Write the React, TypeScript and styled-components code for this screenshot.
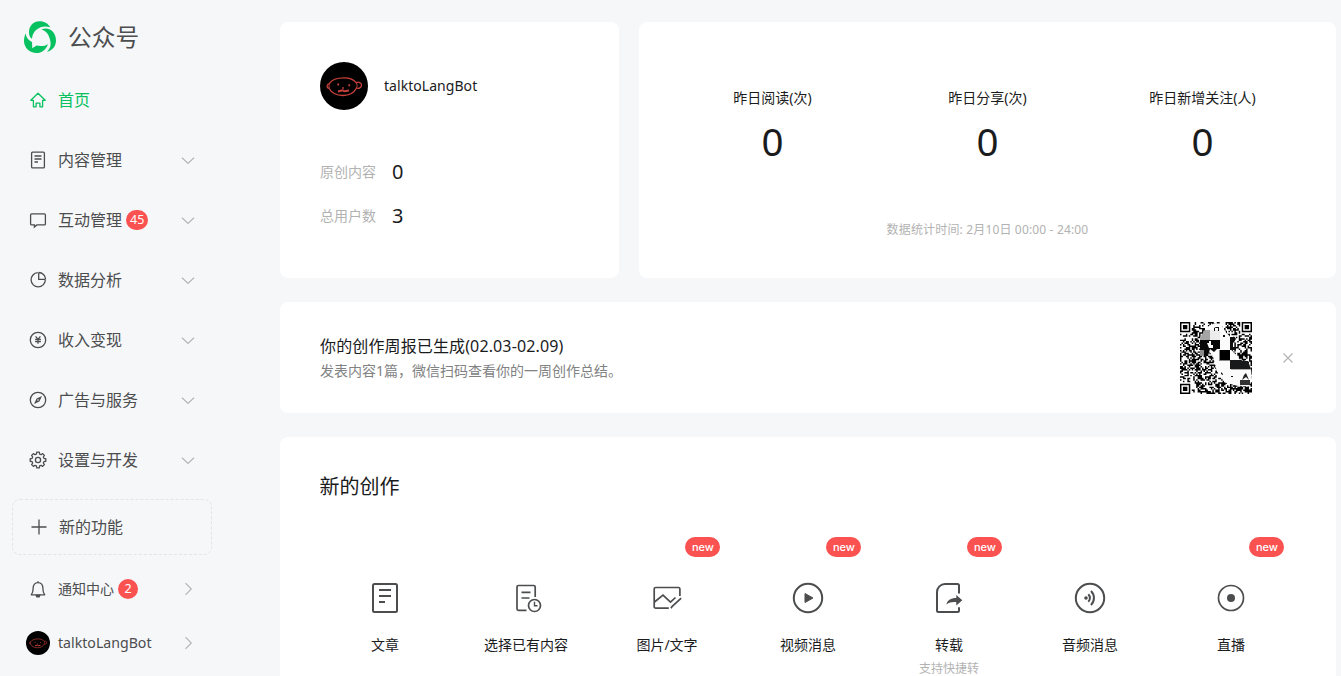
import React from "react";
import styled, { createGlobalStyle } from "styled-components";

const GlobalStyle = createGlobalStyle`
  * { box-sizing: border-box; }
  body {
    margin: 0;
    background: #f6f7f9;
    color: #1a1b1c;
    font-family: "Noto Sans", "Noto Sans CJK SC", sans-serif;
    font-weight: 400;
    overflow: hidden;
  }
  svg { display: block; flex: none; }
`;

const Page = styled.div`
  display: flex;
  width: 1341px;
  height: 676px;
  overflow: hidden;
`;

const Sidebar = styled.aside`
  width: 280px;
  flex: none;
  display: flex;
  flex-direction: column;
  color: #4c4d4f;
`;

const Brand = styled.div`
  height: 70px;
  padding: 4px 0 0 24px;
  display: flex;
  align-items: center;
  gap: 12px;
  font-size: 23.7px;
  line-height: 32px;
`;

const Nav = styled.nav`
  display: flex;
  flex-direction: column;
`;

const NavRow = styled.a<{ $active?: boolean }>`
  height: 60px;
  width: 196px;
  padding-left: 28px;
  display: flex;
  align-items: center;
  font-size: 16px;
  line-height: 24px;
  color: ${(p) => (p.$active ? "#07c160" : "#4c4d4f")};
`;

const NavLabel = styled.span`
  margin-left: 10px;
  white-space: nowrap;
`;

const Count = styled.span`
  margin-left: 4px;
  min-width: 20px;
  height: 20px;
  padding: 0 4px;
  border-radius: 10px;
  background: #fa5151;
  color: #fff;
  font-size: 12.5px;
  line-height: 20px;
  text-align: center;
`;

const Arrow = styled.span`
  margin-left: auto;
  color: #b4b6b8;
`;

const NewFeature = styled.div`
  width: 200px;
  height: 56px;
  margin: 9px 0 0 12px;
  padding-left: 16px;
  border: 1px dashed #e2e4e6;
  border-radius: 8px;
  display: flex;
  align-items: center;
  font-size: 16px;
  line-height: 24px;

  span {
    padding-bottom: 1px;
  }
`;

const FooterRow = styled.div<{ $top: number; $size: number }>`
  height: 40px;
  width: 196px;
  margin-top: ${(p) => p.$top}px;
  padding-left: 26px;
  display: flex;
  align-items: center;
  font-size: ${(p) => p.$size}px;
`;

const FooterIcon = styled.span`
  width: 24px;
  display: flex;
  justify-content: center;
`;

const FooterLabel = styled.span`
  margin-left: 8px;
  padding-bottom: 2px;
  white-space: nowrap;
`;

const Main = styled.main`
  width: 1056px;
  flex: none;
  padding-top: 22px;
  display: flex;
  flex-direction: column;
`;

const TopRow = styled.div`
  display: flex;
  gap: 20px;
`;

const Card = styled.section`
  flex: none;
  background: #fff;
  border-radius: 8px;
`;

const AccountCard = styled(Card)`
  width: 339px;
  height: 256px;
  padding: 40px 40px 0;
`;

const AccountHead = styled.div`
  display: flex;
  align-items: center;
  gap: 16px;
  height: 48px;
  margin-bottom: 40px;
  font-size: 14px;
  letter-spacing: 0.05px;

  span {
    padding-bottom: 2px;
  }
`;

const Figure = styled.div`
  display: flex;
  align-items: center;
  height: 44px;
`;

const FigureLabel = styled.span`
  width: 72px;
  padding-bottom: 2px;
  font-size: 14px;
  color: #b2b2b2;
`;

const FigureValue = styled.span`
  font-size: 20px;
  line-height: 28px;
`;

const StatsCard = styled(Card)`
  flex: 1;
  height: 256px;
  padding: 64px 26px 0;
`;

const StatsRow = styled.div`
  display: grid;
  grid-template-columns: repeat(3, 1fr);
`;

const Stat = styled.div`
  display: flex;
  flex-direction: column;
  align-items: center;
`;

const StatLabel = styled.span`
  font-size: 14px;
  line-height: 24px;
`;

const StatValue = styled.span`
  margin-top: 5px;
  font-size: 38.5px;
  line-height: 52px;
`;

const StatTime = styled.p`
  margin: 53px 0 0;
  text-align: center;
  font-size: 12px;
  letter-spacing: 0.16px;
  line-height: 20px;
  color: #b2b2b2;
`;

const ReportCard = styled(Card)`
  height: 111px;
  margin-top: 24px;
  padding: 0 42px 0 40px;
  display: flex;
  align-items: center;
`;

const ReportText = styled.div`
  flex: 1;
`;

const ReportTitle = styled.h3`
  margin: 0;
  font-size: 16px;
  font-weight: 400;
  letter-spacing: 0.13px;
  line-height: 26px;
`;

const ReportNote = styled.p`
  margin: 0;
  font-size: 14px;
  line-height: 24px;
  color: #818283;
`;

const CloseButton = styled.span`
  margin-left: 30px;
`;

const CreateCard = styled(Card)`
  height: 300px;
  margin-top: 24px;
  padding: 34px 34.5px 0;
`;

const CreateTitle = styled.h2`
  margin: 0 0 0 5px;
  font-size: 20px;
  font-weight: 400;
  line-height: 32px;
`;

const CreateGrid = styled.div`
  margin-top: 75px;
  display: grid;
  grid-template-columns: repeat(7, 1fr);
`;

const CreateItem = styled.div`
  position: relative;
  display: flex;
  flex-direction: column;
  align-items: center;
`;

const CreateLabel = styled.span`
  margin-top: 15px;
  font-size: 14px;
  line-height: 24px;
  white-space: nowrap;
`;

const CreateHint = styled.span`
  margin-top: 1px;
  font-size: 12px;
  line-height: 22px;
  color: #b2b2b2;
`;

const NewBadge = styled.span`
  position: absolute;
  top: -41px;
  left: calc(50% + 18.4px);
  width: 35px;
  height: 20px;
  border-radius: 10px;
  background: #fa5151;
  color: #fff;
  font-family: Inter, sans-serif;
  font-size: 11px;
  font-weight: 500;
  line-height: 20px;
  text-align: center;
`;

const Logo = () => (
  <svg width="32" height="32" viewBox="0 0 32 32" fill="#07c160">
    <path d="M5.200 13.500C3.800 6.500 8.500 .2 15.500 .2c5 0 9 2.600 10.700 6C17.500 3.600 8.600 8.500 8 17.800c-1.500-1-2.500-2.600-2.800-4.300z" />
    <path d="M17.500 8.500C25.500 5.200 32 11.500 32 19.500c0 5.500-3.500 10-9 11.300 3.300-3.300 4.200-6.300 3.300-10.800C25.200 14 22.500 10 17.500 8.500z" />
    <path d="M1.600 12.500C2.100 16.500 4.500 19.500 8 21l.3 6.300L12.500 24.600c4.500 1 8.500.4 11.500-1.400C22 29 17.500 32 12.500 32 5.500 32 0 26.500 0 20c0-2.800.7-5.500 1.600-7.500z" />
  </svg>
);

type LineProps = { size?: number; children: React.ReactNode; width?: number };
const Line = ({ size = 20, width = 1.3, children }: LineProps) => (
  <svg width={size} height={size} viewBox={`0 0 ${size} ${size}`} fill="none" stroke="currentColor" strokeWidth={width}>
    {children}
  </svg>
);

const HomeIcon = () => (
  <Line width={1.3}>
    <path d="M10 3.200l7.200 7.100h-2.600v6.500h-2.700v-3.600H8.100v3.600H5.400v-6.500H2.800z" strokeLinejoin="round" />
  </Line>
);
const DocIcon = () => (
  <Line>
    <rect x="3.600" y="2.100" width="12.800" height="15.800" rx="1" />
    <path d="M6.500 6h7M6.500 9h7M6.500 12h3.500" />
  </Line>
);
const ChatIcon = () => (
  <Line>
    <path d="M3.600 3.900h12.800a1 1 0 0 1 1 1v9a1 1 0 0 1-1 1H8.800L6.400 17v-2.100H3.600a1 1 0 0 1-1-1v-9a1 1 0 0 1 1-1z" />
  </Line>
);
const PieIcon = () => (
  <Line>
    <path d="M9.800 2.700a7.100 7.100 0 1 0 7.500 7.300" />
    <path d="M10.700 2.500V9.300h6.900M10.700 2.500a7 7 0 0 1 6.900 6.800" />
  </Line>
);
const YenIcon = () => (
  <Line>
    <circle cx="10" cy="10" r="7.700" />
    <path d="M7.600 6.300L10 9.300l2.400-3M10 9.300v4.500M7.100 9.300h5.800M7.100 11.500h5.800" />
  </Line>
);
const CompassIcon = () => (
  <Line>
    <circle cx="10" cy="10" r="7.700" />
    <path d="M14 6l-2.600 5.400-2.800-2.800zM6 14l2.600-5.400 2.800 2.800z" fill="currentColor" stroke="none" />
    <circle cx="10" cy="10" r=".8" fill="#f6f7f9" stroke="none" />
  </Line>
);

const gearPath = (() => {
  const points: string[] = [];
  for (let i = 0; i < 8; i++) {
    [[-0.27, 6.1], [-0.16, 7.9], [0.16, 7.9], [0.27, 6.1]].forEach(([offset, radius]) => {
      const angle = (i * Math.PI) / 4 + offset;
      points.push(`${(10 + radius * Math.sin(angle)).toFixed(2)} ${(10 - radius * Math.cos(angle)).toFixed(2)}`);
    });
  }
  return `M${points.join("L")}z`;
})();
const GearIcon = () => (
  <Line>
    <path d={gearPath} strokeLinejoin="round" />
    <circle cx="10" cy="10" r="2.600" />
  </Line>
);
const PlusIcon = () => (
  <Line size={20} width={1.3}>
    <path d="M10 2.500v15M2.500 10h15" />
  </Line>
);
const BellIcon = () => (
  <Line>
    <path d="M3.300 15.800h13.400c-1.500-1.500-1.800-3-1.800-6.200 0-3.700-1.900-6-4.900-6s-4.900 2.300-4.900 6c0 3.200-.3 4.700-1.800 6.200z" strokeLinejoin="round" />
    <path d="M8.300 16.500h3.400l-.6 1.300H8.900zM10 2.300v1.200" fill="currentColor" />
  </Line>
);
const ChevronDown = () => (
  <svg width="16" height="20" viewBox="0 0 16 20" fill="none" stroke="currentColor" strokeWidth="1.2">
    <path d="M2 7.700l6 5.700 6-5.700" />
  </svg>
);
const ChevronRight = () => (
  <svg width="16" height="20" viewBox="0 0 16 20" fill="none" stroke="currentColor" strokeWidth="1.2">
    <path d="M5.500 4.200l5.800 5.800-5.800 5.800" />
  </svg>
);

const Avatar = ({ size }: { size: number }) => (
  <svg width={size} height={size} viewBox="0 0 48 48" fill="none" stroke="#c8423c" strokeWidth="1.3">
    <circle cx="24" cy="24" r="24" fill="#000" stroke="none" />
    <path d="M7.500 23c-.8 1.200-.5 3 1.500 3.300C11.500 31 17 33.500 23 33.500S34 31 36.500 26c2.200.8 5-.3 5-2.800s-3-3.800-5.200-2.400C34 17.500 29.500 15.800 24 15.800c-6.500 0-12.500 2.200-14.700 5.800-1 0-1.500.6-1.800 1.400z" />
    <path d="M9.500 21.600c-.7 1.300-.6 3.200-.2 4.600M36.300 20.800c1 1.700 1 3.700.2 5.300" strokeWidth="1" />
    <path d="M18 29.500l4.500-1.200 2 1 4.500-.8" strokeWidth="2" />
    <path d="M18.200 21.600v2M29.300 22.200v2M23 25.200v1.600" strokeWidth="1.700" />
  </svg>
);

const QR_SIZE = 49;
const qrPath = (() => {
  let seed = 20240;
  const next = () => {
    seed = (seed * 1103515245 + 12345) % 2147483648;
    return seed / 2147483648;
  };
  const corners = [[0, 0], [QR_SIZE - 7, 0], [0, QR_SIZE - 7]];
  let d = "";
  for (let y = 0; y < QR_SIZE; y++) {
    for (let x = 0; x < QR_SIZE; x++) {
      let dark = next() > 0.48;
      corners.forEach(([cx, cy]) => {
        const dx = Math.abs(x - cx - 3);
        const dy = Math.abs(y - cy - 3);
        const ring = Math.max(dx, dy);
        if (ring <= 4) dark = ring === 3 || ring <= 1;
      });
      if (dark) d += `M${x} ${y}h1v1h-1z`;
    }
  }
  return d;
})();

const QrCode = () => (
  <svg width="72" height="72" viewBox="0 0 72 72">
    <rect width="72" height="72" fill="#fff" />
    <path d={qrPath} fill="#000" transform={`scale(${72 / QR_SIZE})`} />
    <path d="M27 5l7-3.500 7 1 5 8 4 4v12l10 11 11 9 1 11-3 7-13-1-11-3-8-11-4-15-7-9-4 0 1-9z" fill="#fbfbfb" />
    <path d="M25 8h5v10h-10v-3z" fill="#a5a5a5" />
    <path d="M30 8h10v10H30z" fill="#ececec" />
    <path d="M20 18h20v9h-3l-3 3-4-3-2 7h-8z" fill="#080808" />
    <path d="M20 28h4v6h-4z" fill="#8b8b8b" />
    <path d="M27 21h2v-2h2v4h2v3h-4zM34 30h3v3h-3z" fill="#fff" />
    <path d="M40 28h10v10H40z" fill="#000" />
    <path d="M39 28h1v10h10v1H39z" fill="#8a8a8a" />
    <path d="M50 15h5v4h-2v6h3v3h-6z" fill="#111" />
    <path d="M50 38h11l2 1h5l3 8H50z" fill="#17191b" />
    <path d="M51 47h20v1H51z" fill="#aaa" />
    <path d="M60 58h10v5H60z" fill="#303030" />
    <path d="M62 58l2-5 2-2 3 7-3-3z" fill="#222" />
    <path d="M34 9v-3l2-1h3v4h-1V6h-3v3zM43 13h2v2h-2zM41 50l2 2v1l-2-1zM51 54h2v1h-2z" fill="#111" />
  </svg>
);

const CloseIcon = () => (
  <svg width="12" height="12" viewBox="0 0 12 12" stroke="#b2b2b2" strokeWidth="1.1">
    <path d="M1.500 1.500l9 9M10.500 1.500l-9 9" />
  </svg>
);

const ArticleIcon = () => (
  <Line size={40} width={2}>
    <rect x="8" y="6" width="24" height="28" rx="1.500" />
    <path d="M14 12h12M14 18h12M14 24h6" />
  </Line>
);
const HistoryIcon = () => (
  <Line size={40} width={1.700}>
    <path d="M20.500 32.300H12.500a1.500 1.500 0 0 1-1.500-1.500V9a1.500 1.500 0 0 1 1.500-1.500h15.200a1.500 1.500 0 0 1 1.500 1.500v10" />
    <path d="M15.500 14.300h9M15.500 20h8" />
    <circle cx="28.500" cy="27.500" r="6" />
    <path d="M28.500 23.800v4h3" strokeWidth="1.400" />
  </Line>
);
const PictureIcon = () => (
  <Line size={40} width={1.700}>
    <path d="M21.800 30.200H8.700a1.500 1.500 0 0 1-1.500-1.500V11a1.500 1.500 0 0 1 1.500-1.500h22.700a1.500 1.500 0 0 1 1.500 1.500v7" />
    <path d="M7.500 24l8.500-6.800 7.500 7 5-4.700M24 30.200l1-1.700 9.200-8.300" />
  </Line>
);
const VideoIcon = () => (
  <Line size={40} width={2}>
    <circle cx="20" cy="20" r="14.200" />
    <path d="M17 15.500l8 4.500-8 4.500z" fill="currentColor" strokeWidth="1" strokeLinejoin="round" />
  </Line>
);
const RepostIcon = () => (
  <Line size={40} width={2}>
    <path d="M30 15.500V7.500a1.500 1.500 0 0 0-1.500-1.500H16a8 8 0 0 0-8 8v18.500A1.500 1.500 0 0 0 9.500 34h19a1.500 1.500 0 0 0 1.500-1.500v-3.200" />
    <path d="M27.300 17l6 5.200-6 5.300v-3.300c-4-.4-7 .2-9.800 2.300.5-4 4.200-6.500 9.800-6.500z" fill="currentColor" stroke="none" />
  </Line>
);
const AudioIcon = () => (
  <Line size={40} width={2}>
    <circle cx="20" cy="20" r="14.200" />
    <circle cx="16" cy="20" r="1.800" fill="currentColor" stroke="none" />
    <path d="M18.300 16.200a5.300 5.300 0 0 1 0 7.600M21 13a9.800 9.800 0 0 1 0 14" />
  </Line>
);
const LiveIcon = () => (
  <Line size={40} width={1.700}>
    <circle cx="20" cy="20" r="12.500" />
    <circle cx="20" cy="20" r="4" fill="currentColor" stroke="none" />
  </Line>
);

const CreateIcon = styled.span`
  height: 40px;
  color: #4c4d4f;
`;

const navItems = [
  { label: "内容管理", Icon: DocIcon },
  { label: "互动管理", Icon: ChatIcon, count: 45 },
  { label: "数据分析", Icon: PieIcon },
  { label: "收入变现", Icon: YenIcon },
  { label: "广告与服务", Icon: CompassIcon },
  { label: "设置与开发", Icon: GearIcon },
];

const createItems = [
  { label: "文章", Icon: ArticleIcon },
  { label: "选择已有内容", Icon: HistoryIcon },
  { label: "图片/文字", Icon: PictureIcon, isNew: true },
  { label: "视频消息", Icon: VideoIcon, isNew: true },
  { label: "转载", Icon: RepostIcon, isNew: true, hint: "支持快捷转" },
  { label: "音频消息", Icon: AudioIcon },
  { label: "直播", Icon: LiveIcon, isNew: true },
];

const stats = ["昨日阅读(次)", "昨日分享(次)", "昨日新增关注(人)"];

export default function App() {
  return (
    <Page>
      <GlobalStyle />
      <Sidebar>
        <Brand>
          <Logo />
          公众号
        </Brand>
        <Nav>
          <NavRow $active>
            <HomeIcon />
            <NavLabel>首页</NavLabel>
          </NavRow>
          {navItems.map(({ label, Icon, count }) => (
            <NavRow key={label}>
              <Icon />
              <NavLabel>{label}</NavLabel>
              {count && <Count>{count}</Count>}
              <Arrow><ChevronDown /></Arrow>
            </NavRow>
          ))}
        </Nav>
        <NewFeature>
          <PlusIcon />
          <NavLabel>新的功能</NavLabel>
        </NewFeature>
        <FooterRow $top={14} $size={14}>
          <FooterIcon><BellIcon /></FooterIcon>
          <FooterLabel>通知中心</FooterLabel>
          <Count>2</Count>
          <Arrow><ChevronRight /></Arrow>
        </FooterRow>
        <FooterRow $top={14} $size={14.15}>
          <FooterIcon><Avatar size={24} /></FooterIcon>
          <FooterLabel>talktoLangBot</FooterLabel>
          <Arrow><ChevronRight /></Arrow>
        </FooterRow>
      </Sidebar>
      <Main>
        <TopRow>
          <AccountCard>
            <AccountHead>
              <Avatar size={48} />
              <span>talktoLangBot</span>
            </AccountHead>
            <Figure>
              <FigureLabel>原创内容</FigureLabel>
              <FigureValue>0</FigureValue>
            </Figure>
            <Figure>
              <FigureLabel>总用户数</FigureLabel>
              <FigureValue>3</FigureValue>
            </Figure>
          </AccountCard>
          <StatsCard>
            <StatsRow>
              {stats.map((label) => (
                <Stat key={label}>
                  <StatLabel>{label}</StatLabel>
                  <StatValue>0</StatValue>
                </Stat>
              ))}
            </StatsRow>
            <StatTime>数据统计时间: 2月10日 00:00 - 24:00</StatTime>
          </StatsCard>
        </TopRow>
        <ReportCard>
          <ReportText>
            <ReportTitle>你的创作周报已生成(02.03-02.09)</ReportTitle>
            <ReportNote>发表内容1篇，微信扫码查看你的一周创作总结。</ReportNote>
          </ReportText>
          <QrCode />
          <CloseButton><CloseIcon /></CloseButton>
        </ReportCard>
        <CreateCard>
          <CreateTitle>新的创作</CreateTitle>
          <CreateGrid>
            {createItems.map(({ label, Icon, isNew, hint }) => (
              <CreateItem key={label}>
                {isNew && <NewBadge>new</NewBadge>}
                <CreateIcon><Icon /></CreateIcon>
                <CreateLabel>{label}</CreateLabel>
                {hint && <CreateHint>{hint}</CreateHint>}
              </CreateItem>
            ))}
          </CreateGrid>
        </CreateCard>
      </Main>
    </Page>
  );
}
